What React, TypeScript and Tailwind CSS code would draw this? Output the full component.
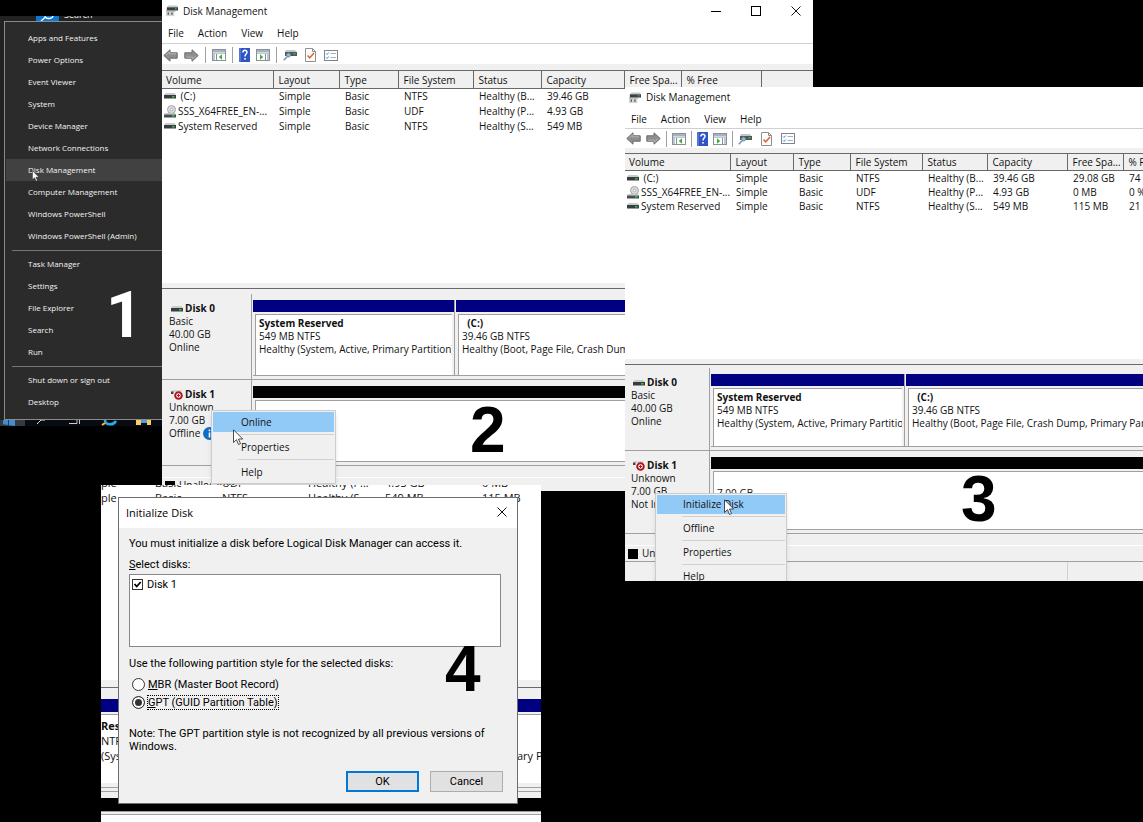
import React from 'react';
import clsx from 'clsx';

type Size = 'large' | 'small';

interface Volume {
    name: string;
    kind: 'drive' | 'disc';
    cells: string[];
}

interface WindowProps {
    size: Size;
    volumes: Volume[];
    status: React.ReactNode;
    className: string;
    children: React.ReactNode;
}

const HEADERS = ['Volume', 'Layout', 'Type', 'File System', 'Status', 'Capacity', 'Free Spa...', '% Free', ''];

const VOLUMES: Volume[] = [
    { name: ' (C:)', kind: 'drive', cells: ['Simple', 'Basic', 'NTFS', 'Healthy (B...', '39.46 GB', '29.08 GB', '74 %', ''] },
    { name: 'SSS_X64FREE_EN-...', kind: 'disc', cells: ['Simple', 'Basic', 'UDF', 'Healthy (P...', '4.93 GB', '0 MB', '0 %', ''] },
    { name: 'System Reserved', kind: 'drive', cells: ['Simple', 'Basic', 'NTFS', 'Healthy (S...', '549 MB', '115 MB', '21 %', ''] }
];

const SIZES = {
    large: {
        title: 'h-[22px]',
        menuBar: 'h-[22px]',
        toolbar: 'h-5 gap-[6px] pt-[2px]',
        tools: 'gap-2',
        strip: 'h-[6px]',
        list: 'h-[213px]',
        headRow: 'h-[18px]',
        row: 'h-[15px]',
        disk: 'h-[86px]',
        label: 'w-[90px] pl-[7px]',
        firstPartition: 'w-[202px]',
        pane: 'pt-[5px]',
        columns: ['w-[111px]', 'w-[66px]', 'w-[59px]', 'w-[75px]', 'w-[68px]', 'w-[83px]', 'w-[57px]', 'w-[80px]', '']
    },
    small: {
        title: 'h-[21px]',
        menuBar: 'h-[21px]',
        toolbar: 'h-[19px] gap-[5px]',
        tools: 'gap-[9px]',
        strip: 'h-[5px]',
        list: 'h-[206px]',
        headRow: 'h-[17px]',
        row: 'h-[14px]',
        disk: 'h-[83px]',
        label: 'w-[85px] pl-[6px]',
        firstPartition: 'w-[194px]',
        pane: 'pt-[3px]',
        columns: ['w-[105px]', 'w-[63px]', 'w-[57px]', 'w-[72px]', 'w-[65px]', 'w-[80px]', 'w-[56px]', 'w-[80px]', '']
    }
};

const DriveIcon = () => (
    <svg width="12" height="6" viewBox="0 0 12 6" className="shrink-0">
        <path d="M1.5 0h9l1.5 2H0z" fill="#c9cccf" />
        <rect y="2" width="12" height="3.5" fill="#3a3d40" />
        <rect x="8" y="3" width="2.5" height="1.5" fill="#35c13c" />
    </svg>
);

const DiscIcon = () => (
    <svg width="12" height="13" viewBox="0 0 12 13" className="shrink-0">
        <circle cx="7.5" cy="4.5" r="4" fill="#d9dbdc" stroke="#a3a6a8" />
        <circle cx="7.5" cy="4.5" r="1.3" fill="#fff" stroke="#999" strokeWidth=".7" />
        <path d="M1 8h10l1 1.5H0z" fill="#c4c7ca" />
        <rect y="9.5" width="12" height="3" fill="#4a4d50" />
        <rect x="8" y="10" width="2.5" height="1.5" fill="#35c13c" />
    </svg>
);

const AppIcon = () => (
    <svg width="13" height="12" viewBox="0 0 14 12" className="shrink-0">
        <path d="M3.5 0H13l1 2H2z" fill="#c5c8ca" />
        <rect x="2" y="2" width="12" height="3.5" fill="#3b3e40" />
        <rect x="10.5" y="3" width="2" height="1.3" fill="#35c13c" />
        <path d="M1 6.5h9v5H1z" fill="#d3d5d7" />
        <path d="M1 6h10" stroke="#8a8d90" />
        <path d="M3.5 7.500v2.500M7.500 7.500v2.500" stroke="#444" strokeWidth="1.3" />
    </svg>
);

const ArrowIcon = ({ flip = false }: { flip?: boolean }) => (
    <svg width="15" height="13" viewBox="0 0 15 13" className={clsx('shrink-0', flip && 'rotate-180')}>
        <path d="M.8 6.5 7 .8v3h7.2v5.4H7v3z" fill="#8f8f8f" stroke="#6b6b6b" />
        <path d="M3 6.2 6.5 3v1.8h6.7" fill="none" stroke="#b4b4b4" />
    </svg>
);

const PaneIcon = ({ flip = false }: { flip?: boolean }) => (
    <svg width="14" height="12" viewBox="0 0 14 12" className="shrink-0">
        <rect x=".5" y=".5" width="13" height="11" fill="#fff" stroke="#8b9199" />
        <rect x="1" y="1" width="12" height="2.5" fill="#a6b2c0" />
        <path d="M1 4.5h12" stroke="#c0c8d0" />
        <path d={flip ? 'M9.5 5v6M11 6h2M11 8h2M11 10h2' : 'M4.5 5v6M1 6h2M1 8h2M1 10h2'} stroke="#7c8fa6" />
        <path d={flip ? 'M4 5.3 7.2 8 4 10.7z' : 'M10 5.3 6.8 8 10 10.7z'} fill="#3fae35" />
    </svg>
);

const HelpIcon = () => (
    <svg width="11" height="14" viewBox="0 0 11 14" className="shrink-0">
        <rect width="11" height="14" fill="#2f55c4" />
        <path d="M1 0v14" stroke="#7c97e2" />
        <path d="M3.8 4.6c0-3.2 4.4-2.8 4.2-.3C7.9 6 6 6 6 8.5" fill="none" stroke="#fff" strokeWidth="1.5" />
        <rect x="5.2" y="10" width="1.6" height="1.6" fill="#fff" />
    </svg>
);

const RescanIcon = () => (
    <svg width="14" height="12" viewBox="0 0 14 12" className="shrink-0">
        <path d="M3 1h9l1.5 2H2z" fill="#c2c5c8" />
        <rect x="2" y="3" width="12" height="4" fill="#50565c" />
        <rect x="10.5" y="4" width="2" height="1.5" fill="#35c13c" />
        <circle cx="5.5" cy="6" r="2" fill="#8fbcd8" stroke="#6a8798" />
        <path d="m4 7.8-3.2 3.4" stroke="#7595aa" strokeWidth="1.5" />
    </svg>
);

const CheckPageIcon = () => (
    <svg width="11" height="14" viewBox="0 0 11 14" className="shrink-0">
        <path d="M.5.5h7l3 3v10H.5z" fill="#fff" stroke="#8f8f8f" />
        <path d="M7.5.5v3h3" fill="none" stroke="#8f8f8f" />
        <path d="m2.5 7.5 2.2 2.3L9 5" fill="none" stroke="#e8662c" strokeWidth="1.7" />
    </svg>
);

const ListIcon = () => (
    <svg width="14" height="11" viewBox="0 0 14 11" className="shrink-0">
        <rect x=".5" y=".5" width="13" height="10" fill="#fff" stroke="#7d8590" />
        <path d="m2 3.5 1 1 1.7-2M2 7.5l1 1 1.7-2" fill="none" stroke="#3c8ad8" />
        <path d="M6.5 3.5H12M6.5 7.5H12" stroke="#a8b0b8" />
    </svg>
);

const OfflineIcon = () => (
    <svg width="12" height="10" viewBox="0 0 12 10" className="shrink-0">
        <path d="M1 0h9l1 2H0z" fill="#d4d6d8" />
        <rect y="1.5" width="2.5" height="2.5" fill="#444" />
        <circle cx="7.5" cy="5.5" r="3.3" fill="#fff" stroke="#b3141d" strokeWidth="2" />
        <path d="M7.5 4v3M6 5.500h3" stroke="#b3141d" />
    </svg>
);

const CloseIcon = () => (
    <svg width="10" height="10" viewBox="0 0 10 10">
        <path d="m.5.5 9 9m0-9-9 9" stroke="#111" />
    </svg>
);

const Cursor = ({ className }: { className: string }) => (
    <svg viewBox="0 0 11 17" className={clsx('absolute', className)}>
        <path d="M.5.8v12.7l3-2.8 2 4.8 2-.9-2-4.6h4.2z" fill="#fff" stroke="#222" strokeWidth=".8" />
    </svg>
);

const StepNumber = ({ value, className }: { value: number; className: string }) => (
    <span className={clsx('absolute text-[64px] font-bold leading-none', className)}>{value}</span>
);

const QuickMenu = () => {
    const groups = [
        [
            'Apps and Features',
            'Power Options',
            'Event Viewer',
            'System',
            'Device Manager',
            'Network Connections',
            'Disk Management',
            'Computer Management',
            'Windows PowerShell',
            'Windows PowerShell (Admin)'
        ],
        ['Task Manager', 'Settings', 'File Explorer', 'Search', 'Run'],
        ['Shut down or sign out', 'Desktop']
    ];

    return (
        <section className="absolute left-0 top-4 h-[410px] w-[162px] overflow-hidden bg-[#222] text-[8px] text-[#f2f2f2]">
            <div className="flex h-[5px] gap-[5px] overflow-hidden pl-9">
                <svg width="23" height="5" viewBox="0 0 23 5" className="bg-[#0a78d6]">
                    <path d="m5 5 4-3.5M9 0c0 3 8 4 8-1" fill="none" stroke="#fff" strokeWidth="1.3" />
                </svg>
                <span className="-mt-[7px] text-[9px] leading-[12px]">Search</span>
            </div>
            <nav className="ml-1 h-[399px] border-y border-l border-[#8a8a8a] bg-[#2b2b2b] pl-px pt-[5px]">
                {groups.map((group, index) => (
                    <div key={group[0]}>
                        {index > 0 && <hr className="mb-[2px] ml-[6px] mt-[3px] border-[#757575]" />}
                        {group.map((item) => (
                            <button
                                key={item}
                                className={clsx(
                                    'block h-[22px] w-full whitespace-nowrap pl-[22px] text-left',
                                    item === 'Disk Management' && 'bg-[#414141]'
                                )}
                            >
                                {item}
                            </button>
                        ))}
                    </div>
                ))}
            </nav>
            <svg width="162" height="7" viewBox="0 0 162 7" className="bg-[#080c12]">
                <rect width="25" height="7" fill="#333a42" />
                <path d="M3 0h5v5l-5-.7zM9 0h6v6l-6-.8z" fill="#3f8fd4" />
                <path d="m37 4 4-4h4" fill="none" stroke="#ddd" />
                <path d="M69 3.5h8V0M79.5 0v4" fill="none" stroke="#ccc" />
                <path d="M105 0c0 5 8 6 11 1" fill="none" stroke="#29a9e8" strokeWidth="2.5" />
                <path d="m102 5 3-2" stroke="#f4c430" strokeWidth="2" />
                <path d="M136 0h15v5h-4V2h-6v3h-5z" fill="#f6cf62" />
                <rect x="141" width="6" height="3" fill="#4ba3dc" />
            </svg>
            <Cursor className="left-8 top-[154px] w-2" />
        </section>
    );
};

interface PartitionProps {
    name?: string;
    lines: string[];
    className: string;
    boxClass?: string;
}

const Partition = ({ name, lines, className, boxClass }: PartitionProps) => (
    <div className={clsx('flex min-w-0 flex-col', className)}>
        <div className={clsx('h-3', name ? 'bg-[#000080]' : 'bg-black')} />
        <div
            className={clsx(
                'ml-[2px] mt-[2px] flex-1 overflow-hidden whitespace-nowrap border-l border-t border-[#a0a0a0] bg-white pl-[3px] pt-[2px] leading-[13px]',
                boxClass
            )}
        >
            <p className="h-[13px] whitespace-pre font-bold">{name}</p>
            {lines.map((line) => (
                <p key={line}>{line}</p>
            ))}
        </div>
    </div>
);

interface DiskRowProps {
    size: Size;
    icon: React.ReactNode;
    title: string;
    details: React.ReactNode[];
    children: React.ReactNode;
}

const DiskRow = ({ size, icon, title, details, children }: DiskRowProps) => {
    const s = SIZES[size];
    return (
        <div className={clsx('flex', s.disk)}>
            <div className={clsx('shrink-0 overflow-hidden whitespace-nowrap border-b border-r border-[#a0a0a0] pt-2 leading-[13px]', s.label)}>
                <p className="flex items-center gap-[2px] pl-[2px] font-bold">
                    {icon}
                    {title}
                </p>
                {details.map((detail, index) => (
                    <p key={index}>{detail}</p>
                ))}
            </div>
            <div className="flex min-w-0 flex-1 flex-col border-b border-[#a0a0a0] pb-[3px] pl-[1px] pt-[6px]">
                <div className="flex min-h-0 flex-1 border-b border-[#a0a0a0]">{children}</div>
            </div>
        </div>
    );
};

const DiskManagement = ({ size, volumes, status, className, children }: WindowProps) => {
    const s = SIZES[size];
    const divider = <span className="h-4 w-px bg-[#a0a0a0]" />;

    return (
        <section className={clsx('absolute overflow-hidden bg-[#f0f0f0] text-[10px] text-[#111]', className)}>
            <header className={clsx('flex items-center bg-white pl-[3px]', s.title)}>
                <AppIcon />
                <h2 className="flex-1 pl-[5px]">Disk Management</h2>
                {size === 'large' && (
                    <div className="flex items-center gap-[30px] pr-3">
                        <button aria-label="Minimize" className="flex h-4 w-[10px] items-center">
                            <span className="h-px w-full bg-black" />
                        </button>
                        <button aria-label="Maximize" className="size-[10px] border border-black" />
                        <button aria-label="Close">
                            <CloseIcon />
                        </button>
                    </div>
                )}
            </header>
            <nav className={clsx('flex items-center gap-[14px] border-b border-[#d0d0d0] bg-white pl-[6px] pt-[2px]', s.menuBar)}>
                {['File', 'Action', 'View', 'Help'].map((item) => (
                    <button key={item}>{item}</button>
                ))}
            </nav>
            <div className={clsx('flex items-center bg-white pl-[1px]', s.toolbar)}>
                <ArrowIcon />
                <ArrowIcon flip />
                {divider}
                <PaneIcon />
                {divider}
                <HelpIcon />
                <PaneIcon flip />
                {divider}
                <div className={clsx('flex items-center', s.tools)}>
                    <RescanIcon />
                    <CheckPageIcon />
                    <ListIcon />
                </div>
            </div>
            <div className={s.strip} />
            <div className={clsx('overflow-hidden bg-white', s.list)}>
                <table className="w-full table-fixed border-collapse whitespace-nowrap text-left">
                    <colgroup>
                        {s.columns.map((width, index) => (
                            <col key={index} className={width} />
                        ))}
                    </colgroup>
                    <thead>
                        <tr className={clsx('border-b border-t border-[#696969] bg-[#f0f0f0]', s.headRow)}>
                            {HEADERS.map((header) => (
                                <th
                                    key={header}
                                    className="border-r border-[#696969] p-0 pl-[5px] font-normal leading-[14px] first:pl-1 last:border-r-0"
                                >
                                    {header}
                                </th>
                            ))}
                        </tr>
                    </thead>
                    <tbody>
                        {volumes.map((volume) => (
                            <tr key={volume.name} className={s.row}>
                                <td className="p-0 pl-[2px] leading-[14px]">
                                    <span className="flex h-[14px] items-center gap-[2px] whitespace-pre">
                                        {volume.kind === 'disc' ? <DiscIcon /> : <DriveIcon />}
                                        {volume.name}
                                    </span>
                                </td>
                                {volume.cells.map((cell, index) => (
                                    <td key={index} className="p-0 pl-[6px] leading-[14px]">{cell}</td>
                                ))}
                            </tr>
                        ))}
                    </tbody>
                </table>
            </div>
            <div className="h-[6px] border-b border-[#696969]" />
            <div className={s.pane}>
                <DiskRow size={size} icon={<DriveIcon />} title="Disk 0" details={['Basic', '40.00 GB', 'Online']}>
                    <Partition
                        name="System Reserved"
                        lines={['549 MB NTFS', 'Healthy (System, Active, Primary Partition)']}
                        className={clsx('border-r border-[#a0a0a0]', s.firstPartition)}
                        boxClass="mr-[2px]"
                    />
                    <Partition
                        name="  (C:)"
                        lines={['39.46 GB NTFS', 'Healthy (Boot, Page File, Crash Dump, Primary Partition)']}
                        className="ml-[1px] flex-1"
                    />
                </DiskRow>
                <DiskRow size={size} icon={<OfflineIcon />} title="Disk 1" details={['Unknown', '7.00 GB', status]}>
                    <Partition lines={['7.00 GB']} className="flex-1" />
                </DiskRow>
            </div>
            <div className="h-3 border-b border-white" />
            <div className="flex h-4 items-center gap-1 border-b border-[#a0a0a0] pl-[3px]">
                <span className="size-[10px] bg-black" />
                Unallocated
            </div>
            <div className="flex h-[18px] justify-end">
                <span className="w-[76px] border-l border-[#d0d0d0]" />
            </div>
            {children}
        </section>
    );
};

const ContextMenu = ({ items, itemClass, className }: { items: string[]; itemClass: string; className: string }) => (
    <div className={clsx('absolute border border-[#ccc] bg-[#f0f0f0] p-px shadow-md', className)}>
        {items.map((item, index) => (
            <React.Fragment key={item}>
                {index > 0 && <hr className="my-[2px] ml-[25px] border-[#d0d0d0]" />}
                <button className={clsx('block w-full text-left', index === 0 && 'bg-[#91c9f7]', itemClass)}>{item}</button>
            </React.Fragment>
        ))}
    </div>
);

// window that sits behind the Initialize Disk dialog
const BackgroundWindow = () => (
    <div className="h-full whitespace-nowrap bg-white text-[11px] text-[#111]">
        <div className="h-[195px] overflow-hidden">
            <div className="-mt-[10px] grid grid-cols-[54px_67px_86px_77px_97px_1fr] leading-[15px]">
                {['ple', 'Basic', 'UDF', 'Healthy (P...', '4.93 GB', '0 MB', 'ple', 'Basic', 'NTFS', 'Healthy (S...', '549 MB', '115 MB'].map(
                    (cell, index) => (
                        <span key={index}>{cell}</span>
                    )
                )}
            </div>
        </div>
        <div className="h-2 border-b border-[#696969] bg-[#f0f0f0]" />
        <div className="h-[11px] bg-[#f0f0f0]" />
        <div className="h-[13px] bg-[#000080]" />
        <div className="h-[3px] border-b border-[#a0a0a0] bg-[#f0f0f0]" />
        <div className="flex h-[68px] justify-between overflow-hidden pt-[3px] leading-[15px]">
            <div>
                <p className="font-bold">Reserved</p>
                <p>NTFS</p>
                <p>(System</p>
            </div>
            <p className="w-6 self-start pt-[30px]">ary Partition</p>
        </div>
        <div className="h-[5px] border-b border-[#a0a0a0] bg-[#f0f0f0]" />
        <div className="h-1 border-b border-[#a0a0a0] bg-[#f0f0f0]" />
        <div className="h-[6px] bg-[#f0f0f0]" />
        <div className="h-[13px] bg-black" />
        <div className="h-1 border-y border-[#a0a0a0] bg-[#f0f0f0]" />
    </div>
);

const InitializeDialog = () => {
    const radio =
        'size-[13px] appearance-none rounded-full border border-[#333] bg-white checked:bg-[#333] checked:shadow-[inset_0_0_0_2px_white]';

    return (
        <div
            role="dialog"
            aria-labelledby="dialog-title"
            className="absolute left-[17px] top-3 w-[400px] border border-[#6d6d6d] bg-[#f0f0f0] font-['Roboto',sans-serif] text-[11px] leading-[13px] text-black"
        >
            <header className="flex h-[30px] items-center justify-between bg-white pb-[2px] pl-[7px] pr-[10px]">
                <h2 id="dialog-title" className="font-['Open_Sans','Noto_Sans',sans-serif]">Initialize Disk</h2>
                <button aria-label="Close">
                    <CloseIcon />
                </button>
            </header>
            <form className="px-[10px] pb-[11px] pt-[9px]" onSubmit={(e) => e.preventDefault()}>
                <p>You must initialize a disk before Logical Disk Manager can access it.</p>
                <p className="mt-2"><u>S</u>elect disks:</p>
                <div className="mr-[6px] mt-[3px] h-[73px] border border-[#828790] bg-white pl-[2px] pt-[3px]">
                    <label className="flex items-center gap-1">
                        <span className="relative size-[11px]">
                            <input type="checkbox" defaultChecked className="block size-[11px] appearance-none border border-[#333] bg-white" />
                            <svg viewBox="0 0 11 11" className="pointer-events-none absolute inset-0">
                                <path d="m2.5 5 2.2 2.5L8.7 3" fill="none" stroke="#000" strokeWidth="1.8" />
                            </svg>
                        </span>
                        Disk 1
                    </label>
                </div>
                <p className="mt-[10px]">Use the following partition style for the selected disks:</p>
                <label className="ml-[3px] mt-[5px] flex h-[18px] items-center gap-[3px]">
                    <input type="radio" name="style" className={radio} />
                    <span><u>M</u>BR (Master Boot Record)</span>
                </label>
                <label className="ml-[3px] flex h-[18px] items-center gap-[2px]">
                    <input type="radio" name="style" defaultChecked className={radio} />
                    <span className="border border-dotted border-black"><u>G</u>PT (GUID Partition Table)</span>
                </label>
                <p className="mt-4 w-[360px]">
                    Note: The GPT partition style is not recognized by all previous versions of Windows.
                </p>
                <div className="mr-[4px] mt-[18px] flex justify-end gap-[11px]">
                    <button className="h-[21px] w-[73px] border-2 border-[#0078d7] bg-[#e1e1e1]">OK</button>
                    <button className="h-[21px] w-[73px] border border-[#adadad] bg-[#e1e1e1]">Cancel</button>
                </div>
            </form>
        </div>
    );
};

const App: React.FC = () => {
    return (
        <main className="relative min-h-screen w-full overflow-hidden bg-black font-['Open_Sans','Noto_Sans',sans-serif]">
            <QuickMenu />

            <DiskManagement
                size="large"
                volumes={VOLUMES}
                className="left-[162px] top-0 h-[491px] w-[651px]"
                status={
                    <span className="flex items-center gap-[3px]">
                        Offline
                        <svg width="13" height="13" viewBox="0 0 13 13">
                            <circle cx="6.5" cy="6.5" r="6.5" fill="#0f6fc5" />
                            <path d="M6.5 2.5v1.8M6.5 5.5v5" stroke="#fff" strokeWidth="1.6" />
                        </svg>
                    </span>
                }
            >
                <ContextMenu
                    items={['Online', 'Properties', 'Help']}
                    itemClass="h-5 pl-7"
                    className="left-[49px] top-[410px] w-[125px]"
                />
                <Cursor className="left-[71px] top-[429px] w-[11px]" />
            </DiskManagement>

            <DiskManagement
                size="small"
                volumes={VOLUMES}
                className="left-[625px] right-0 top-[87px] h-[494px]"
                status="Not Initialized"
            >
                <ContextMenu
                    items={['Initialize Disk', 'Offline', 'Properties', 'Help']}
                    itemClass="h-[19px] pl-[26px]"
                    className="left-[30px] top-[406px] w-[132px]"
                />
                <Cursor className="left-[99px] top-[412px] w-[11px]" />
            </DiskManagement>

            <section className="absolute bottom-0 left-[101px] top-[485px] w-[440px] overflow-hidden">
                <BackgroundWindow />
                <InitializeDialog />
            </section>

            <StepNumber value={1} className="left-[106px] top-[284px] font-['Roboto',sans-serif] text-white" />
            <StepNumber value={2} className="left-[470px] top-[398px] font-['Liberation_Sans',sans-serif] text-black" />
            <StepNumber value={3} className="left-[961px] top-[467px] font-['Liberation_Sans',sans-serif] text-black" />
            <StepNumber value={4} className="left-[445px] top-[637px] font-['Liberation_Sans',sans-serif] text-black" />
        </main>
    );
};

export default App;
